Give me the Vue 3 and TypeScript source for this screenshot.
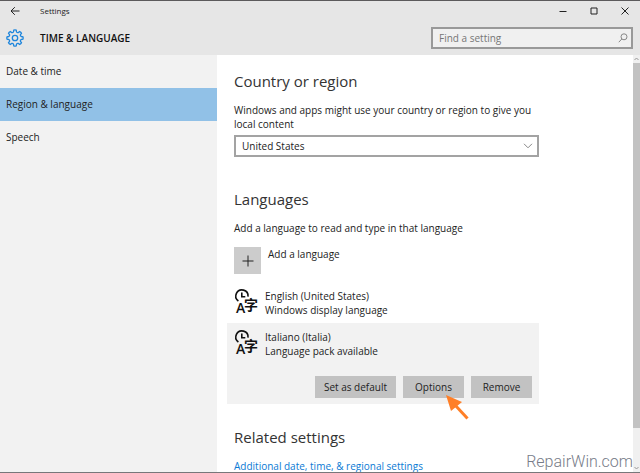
<script setup lang="ts">
import { ref } from 'vue'

interface Language {
  name: string
  status: string
}

const sections = ['Date & time', 'Region & language', 'Speech']
const activeSection = ref('Region & language')
const query = ref('')
const country = ref('United States')
const countries = ['United States', 'Italy']
const languages: Language[] = [
  { name: 'English (United States)', status: 'Windows display language' },
  { name: 'Italiano (Italia)', status: 'Language pack available' },
]
const selected = ref('Italiano (Italia)')

// Outline of an eight-toothed cog centred on the origin.
function cogPath(teeth: number, outer: number, inner: number): string {
  const step = (Math.PI * 2) / teeth
  const at = (r: number, a: number) => `${(r * Math.cos(a)).toFixed(2)} ${(r * Math.sin(a)).toFixed(2)}`
  let d = ''
  for (let i = 0; i < teeth; i++) {
    const a = i * step
    d += `${i ? 'L' : 'M'}${at(inner, a - step * 0.3)}L${at(outer, a - step * 0.2)}`
    d += `Q${at(outer + 0.4, a)} ${at(outer, a + step * 0.2)}L${at(inner, a + step * 0.3)}`
    d += `Q${at(inner - 0.9, a + step * 0.5)} ${at(inner, a + step * 0.7)}`
  }
  return d + 'Z'
}
const cog = cogPath(8, 8, 6.4)
</script>

<template>
  <div class="window">
    <header class="titlebar">
      <button class="back" aria-label="Back">
        <svg width="10" height="10" viewBox="0 0 10 10"><path d="M9.5 5H1M4.8 1.2 1 5l3.8 3.8" /></svg>
      </button>
      <span class="app-name">Settings</span>
      <div class="controls">
        <button aria-label="Minimize"><svg width="8" height="8" viewBox="0 0 8 8"><path d="M0.5 4.5h7" /></svg></button>
        <button aria-label="Maximize"><svg width="8" height="8" viewBox="0 0 8 8"><path d="M1 1h6v6H1z" /></svg></button>
        <button aria-label="Close"><svg width="8" height="8" viewBox="0 0 8 8"><path d="M0.5 0.5l7 7M7.5 0.5l-7 7" /></svg></button>
      </div>
    </header>

    <div class="heading-bar">
      <svg class="cog" width="18" height="18" viewBox="-9 -9 18 18">
        <path :d="cog" />
        <circle r="2.7" />
      </svg>
      <h1>TIME &amp; LANGUAGE</h1>
      <label class="search">
        <input v-model="query" type="text" placeholder="Find a setting" aria-label="Find a setting" />
        <svg width="10" height="10" viewBox="0 0 10 10"><circle cx="6" cy="3.8" r="3" /><path d="M3.8 6 0.8 9.2" /></svg>
      </label>
    </div>

    <div class="body">
      <nav class="sidebar">
        <a
          v-for="section in sections"
          :key="section"
          href="#"
          :class="{ active: section === activeSection }"
          @click.prevent="activeSection = section"
        >{{ section }}</a>
      </nav>

      <main class="content">
        <section class="region">
          <h2>Country or region</h2>
          <label for="country">Windows and apps might use your country or region to give you local content</label>
          <div class="dropdown">
            <select id="country" v-model="country">
              <option v-for="c in countries" :key="c">{{ c }}</option>
            </select>
            <svg width="10" height="6" viewBox="0 0 10 6"><path d="M1 0.8l4 4 4-4" /></svg>
          </div>
        </section>

        <section class="languages">
          <h2>Languages</h2>
          <p>Add a language to read and type in that language</p>
          <button class="add">
            <span class="plus"><svg width="12" height="12" viewBox="0 0 12 12"><path d="M6 0.5v11M0.5 6h11" /></svg></span>
            <span>Add a language</span>
          </button>
          <ul>
            <li
              v-for="lang in languages"
              :key="lang.name"
              :class="{ selected: lang.name === selected }"
              @click="selected = lang.name"
            >
              <div class="language">
                <svg class="lang-icon" width="24" height="24" viewBox="0 0 24 24" aria-hidden="true">
                  <path d="M4.4 12A6.1 6.1 0 1 1 14 7.6" />
                  <path d="M7.8 3.6v4.200h3.500" />
                  <text class="latin" x="2" y="24">A</text>
                  <text class="han" x="10" y="21">字</text>
                </svg>
                <div>
                  <div>{{ lang.name }}</div>
                  <div>{{ lang.status }}</div>
                </div>
              </div>
              <div v-if="lang.name === selected" class="actions">
                <button>Set as default</button>
                <button class="options">
                  Options
                  <svg class="pointer" width="24" height="26" viewBox="0 0 24 26" aria-hidden="true">
                    <path class="head" d="M0 0 16 7 5 16z" />
                    <path class="tail" d="M9 10 21.5 23.5" />
                  </svg>
                </button>
                <button>Remove</button>
              </div>
            </li>
          </ul>
        </section>

        <section class="related">
          <h2>Related settings</h2>
          <a href="#">Additional date, time, &amp; regional settings</a>
        </section>
      </main>

      <div class="scrollbar" aria-hidden="true">
        <svg width="7" height="8" viewBox="0 0 7 8"><path d="M1.5 5l2-2 2 2" /></svg>
        <div class="track"><div class="thumb"></div></div>
        <svg width="7" height="8" viewBox="0 0 7 8"><path d="M1.5 3l2 2 2-2" /></svg>
      </div>
    </div>
    <div class="watermark">RepairWin.com</div>
  </div>
</template>

<style>
body {
  margin: 0;
}
</style>

<style scoped>
* {
  box-sizing: border-box;
}

.window {
  position: relative;
  display: flex;
  flex-direction: column;
  height: 100vh;
  overflow: hidden;
  border-top: 1px solid #5c5a5c;
  border-bottom: 1px solid #77777a;
  background: #fff;
  color: #222;
  font: 10px/14px "Open Sans", "Noto Sans", sans-serif;
}

button,
input,
select {
  margin: 0;
  padding: 0;
  border: 0;
  border-radius: 0;
  outline: 0;
  background: none;
  color: inherit;
  font: inherit;
}

svg {
  display: block;
  fill: none;
  stroke: #222;
}

h1,
h2,
p,
ul {
  margin: 0;
  padding: 0;
}

.titlebar {
  display: flex;
  flex: none;
  align-items: center;
  height: 20px;
  padding-left: 10px;
  background: #e6e6e6;
}

.back {
  width: 30px;
}

.app-name {
  font-size: 8px;
}

.controls {
  display: flex;
  margin-left: auto;
}

.controls button {
  display: flex;
  justify-content: center;
  width: 31px;
}

.heading-bar {
  display: flex;
  flex: none;
  align-items: center;
  height: 34px;
  padding: 0 7px 0 6px;
  background: #e6e6e6;
}

.cog {
  stroke: #1f86dc;
  stroke-width: 1.3;
}

h1 {
  margin-left: 16px;
  font-size: 10px;
  font-weight: 600;
  color: #111;
}

.search {
  display: flex;
  align-items: center;
  width: 202px;
  height: 22px;
  margin-left: auto;
  padding: 0 3px 0 6px;
  border: 2px solid #999;
  background: #f0f0f0;
}

.search input {
  flex: 1;
  min-width: 0;
}

.search input::placeholder {
  color: #767676;
  opacity: 1;
}

.search svg {
  stroke: #888;
}

.body {
  display: flex;
  flex: 1;
  min-height: 0;
}

.sidebar {
  flex: none;
  width: 217px;
  background: #f2f2f2;
}

.sidebar a {
  display: block;
  padding: 9px 6px 10px;
  color: inherit;
  text-decoration: none;
}

.sidebar a.active {
  background: #91c1e7;
}

.content {
  flex: 1;
  min-width: 0;
  padding: 14px 94px 0 17px;
  overflow: hidden;
}

h2 {
  font-size: 15px;
  font-weight: 400;
  line-height: 24px;
  color: #333;
}

.region label {
  display: block;
  margin-top: 10px;
}

.dropdown {
  position: relative;
  margin-top: 4px;
}

.dropdown select {
  width: 100%;
  height: 22px;
  padding: 0 24px 0 6px;
  border: 2px solid #a3a3a3;
  appearance: none;
}

.dropdown svg {
  position: absolute;
  top: 8px;
  right: 6px;
  stroke: #888;
  pointer-events: none;
}

.languages {
  margin-top: 30px;
}

.languages p {
  margin-top: 10px;
}

.add {
  display: flex;
  gap: 7px;
  margin-top: 12px;
}

.plus {
  display: flex;
  align-items: center;
  justify-content: center;
  width: 27px;
  height: 27px;
  background: #ccc;
}

ul {
  margin: 8px 0 0 -7px;
  list-style: none;
}

li {
  padding: 7px 7px 6px;
}

li.selected {
  background: #f2f2f2;
}

.language {
  display: flex;
  gap: 7px;
}

.lang-icon {
  stroke: #111;
  stroke-width: 1.6;
  overflow: visible;
}

.lang-icon text {
  fill: #111;
  stroke: none;
}

.latin {
  font-size: 14px;
  font-weight: 600;
  font-family: "Open Sans", sans-serif;
}

.han {
  font-size: 14px;
  font-weight: 700;
  font-family: "Noto Sans CJK SC", sans-serif;
}

.actions {
  display: flex;
  gap: 7px;
  justify-content: flex-end;
  margin-top: 18px;
}

.actions button {
  position: relative;
  min-width: 61px;
  height: 22px;
  padding: 0 9px;
  background: #c2c2c2;
}

.pointer {
  position: absolute;
  top: 19px;
  left: 43px;
  z-index: 1;
  pointer-events: none;
}

.pointer .head {
  fill: #ff7f27;
  stroke: none;
}

.pointer .tail {
  stroke: #ff7f27;
  stroke-width: 3;
}

.related {
  margin-top: 21px;
}

.related a {
  display: block;
  margin-top: 10px;
  color: #0a7ad4;
  text-decoration: none;
}

.scrollbar {
  display: flex;
  flex: none;
  flex-direction: column;
  width: 7px;
  background: #f0f0f0;
}

.scrollbar svg {
  stroke: #999;
}

.track {
  flex: 1;
}

.thumb {
  height: 91%;
  background: #c2c2c2;
}

.watermark {
  position: absolute;
  right: 7px;
  bottom: 0;
  color: #777c88;
  font: 300 16px/20px Roboto, sans-serif;
}
</style>
